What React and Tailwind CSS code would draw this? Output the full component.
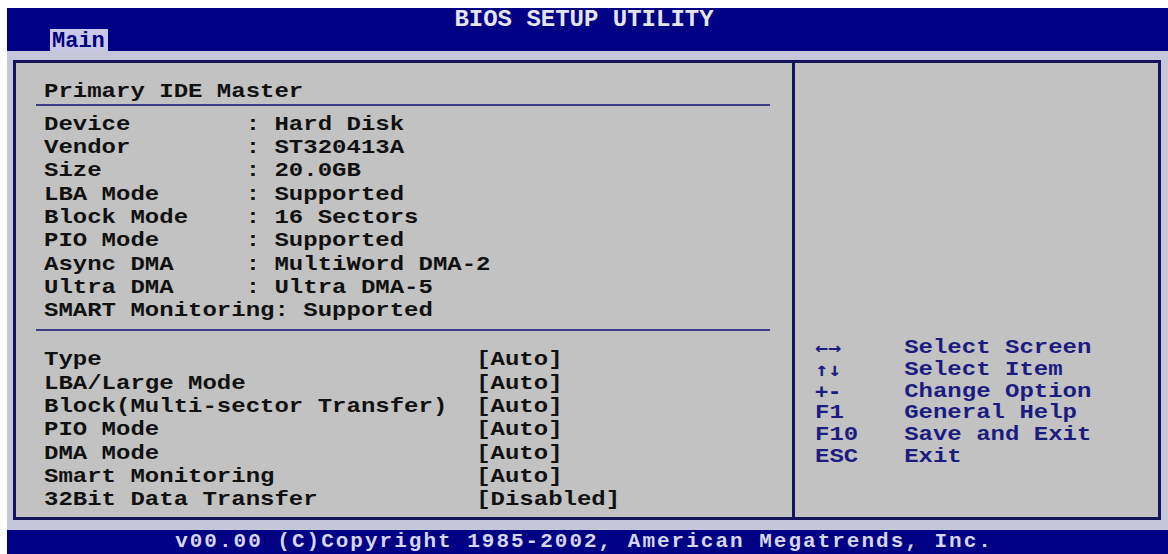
const mono = "font-['Liberation_Mono','DejaVu_Sans_Mono',monospace]";

const deviceInfo = [
  'Device        : Hard Disk',
  'Vendor        : ST320413A',
  'Size          : 20.0GB',
  'LBA Mode      : Supported',
  'Block Mode    : 16 Sectors',
  'PIO Mode      : Supported',
  'Async DMA     : MultiWord DMA-2',
  'Ultra DMA     : Ultra DMA-5',
  'SMART Monitoring: Supported',
];

const options = [
  ['Type', '[Auto]'],
  ['LBA/Large Mode', '[Auto]'],
  ['Block(Multi-sector Transfer)', '[Auto]'],
  ['PIO Mode', '[Auto]'],
  ['DMA Mode', '[Auto]'],
  ['Smart Monitoring', '[Auto]'],
  ['32Bit Data Transfer', '[Disabled]'],
];

// arrow glyphs come from DejaVu, which draws them heavier
const keys = [
  ['\u2190\u2192', 'Select Screen', true],
  ['\u2191\u2193', 'Select Item', true],
  ['+-', 'Change Option', true],
  ['F1', 'General Help'],
  ['F10', 'Save and Exit'],
  ['ESC', 'Exit'],
];

// text-mode glyphs are wider than the font's own cells, so stretch horizontally
const wide = 'origin-left scale-x-[1.143]';

function Row({ children }) {
  return <div className="h-[23.3px] leading-[23.3px] whitespace-pre">{children}</div>;
}

export default function App() {
  return (
    <div className="w-[1168px] h-[554px] bg-white pt-[8px] pl-[7px] flex flex-col overflow-hidden">
      {/* Title bar with menu tab */}
      <header className="bg-[#000084] h-[43px] flex flex-col">
        <div
          className={`${mono} h-[21px] leading-[23px] text-center text-[24px] font-bold text-[#e4e4f0] pr-[7px]`}
        >
          BIOS SETUP UTILITY
        </div>
        <div className="h-[22px] ml-[43px] flex items-end">
          <span
            className={`${mono} h-[22px] w-[58px] bg-[#c8c8e6] text-[#00007e] text-[22px] font-bold leading-[25px] pl-[2px]`}
          >
            Main
          </span>
        </div>
      </header>

      <div className="flex-1 bg-[#c6c6da] pt-[9px] pl-[6px] pr-[7px] pb-[10px]">
        <div className="h-full border-[3px] border-[#14145c] bg-[#c2c2c2] flex">
          {/* Left pane: drive details and options */}
          <section
            className={`${mono} w-[779px] border-r-[3px] border-[#14145c] text-[21px] font-bold text-[#111111] pt-[17px]`}
          >
            <div className="pl-[28px]">
              <div className={wide}>
                <Row>Primary IDE Master</Row>
              </div>
            </div>
            <div className="ml-[20px] mr-[22px] mt-[0.5px] h-[2px] bg-[#3c3c86]" />
            <div className="pl-[28px] pt-[7px]">
              <div className={wide}>
                {deviceInfo.map((line) => (
                  <Row key={line}>{line}</Row>
                ))}
              </div>
            </div>
            <div className="ml-[20px] mr-[22px] mt-[7px] h-[2px] bg-[#3c3c86]" />
            <div className="pl-[28px] pt-[17px]">
              <div className={wide}>
                {options.map(([label, value]) => (
                  <Row key={label}>
                    {label.padEnd(30, ' ')}
                    {value}
                  </Row>
                ))}
              </div>
            </div>
          </section>

          {/* Right pane: key help */}
          <section
            className={`${mono} flex-1 pl-[20px] pt-[274px] text-[21px] font-bold text-[#1c1c80]`}
          >
            <div className={wide}>
              {keys.map(([key, text, glyph]) => (
                <div key={text} className="flex h-[21.8px] leading-[21.8px]">
                  <span
                    className={
                      glyph
                        ? "w-[78px] font-['DejaVu_Sans_Mono',monospace] text-[19px]"
                        : 'w-[78px]'
                    }
                  >
                    {key}
                  </span>
                  <span className="whitespace-pre">{text}</span>
                </div>
              ))}
            </div>
          </section>
        </div>
      </div>

      <footer
        className={`${mono} bg-[#000084] h-[24px] leading-[24px] text-center text-[21px] tracking-[2px] font-bold text-[#d6d6f0] pr-[7px] whitespace-pre`}
      >
        v00.00 (C)Copyright 1985-2002, American Megatrends, Inc.
      </footer>
    </div>
  );
}
